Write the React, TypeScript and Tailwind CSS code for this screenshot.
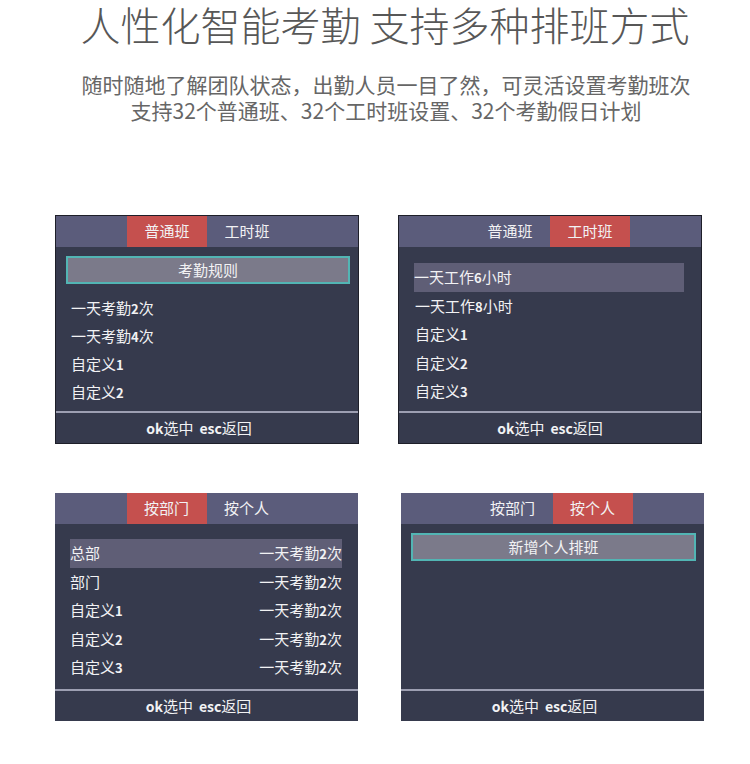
import React from 'react';

type PanelProps = {
  tabs: [string, string];
  active: 0 | 1;
  bordered?: boolean;
  shiftFooter?: boolean;
  className?: string;
  children?: React.ReactNode;
};

// Bold latin digits as on the device's bitmap font
const Label: React.FC<{ text: string }> = ({ text }) => (
  <span>
    {text.split(/(\d+)/).map((part, i) =>
      /\d/.test(part) ? (
        <span key={i} className="font-bold text-[13px]">{part}</span>
      ) : (
        <span key={i}>{part}</span>
      )
    )}
  </span>
);

const Panel: React.FC<PanelProps> = ({ tabs, active, bordered, shiftFooter, className = '', children }) => (
  <div
    className={`flex flex-col bg-[#363a4d] text-[15px] text-[#f2f2f4] ${bordered ? 'border border-[#1e1f29]' : ''} ${className}`}
  >
    <div className="h-[31px] shrink-0 bg-[#5b5c7b] flex justify-center">
      {tabs.map((t, i) => (
        <div
          key={t}
          className={`w-[80px] flex items-center justify-center ${i === active ? 'bg-[#c5504e]' : ''}`}
        >
          {t}
        </div>
      ))}
    </div>
    <div className="flex-1 flex flex-col">{children}</div>
    <div className="h-[2px] shrink-0 bg-[#9d9fb2]" />
    <div className={`h-[30px] shrink-0 flex items-center justify-center ${shiftFooter ? 'pr-[16px]' : ''}`}>
      <span className="font-bold text-[14px]">ok</span>
      <span>选中</span>
      <span className="font-bold text-[14px] ml-[6px]">esc</span>
      <span>返回</span>
    </div>
  </div>
);

const TealBox: React.FC<{ text: string; className?: string }> = ({ text, className = '' }) => (
  <div
    className={`h-[28px] ml-[10px] mr-[8px] bg-[#7b7a8a] border-2 border-[#52b5b4] flex items-center justify-center ${className}`}
  >
    {text}
  </div>
);

export default function App() {
  return (
    <div className="w-[750px] h-[764px] bg-white overflow-hidden font-['Noto_Sans_CJK_SC',sans-serif]">
      <h1 className="pl-[20px] text-center text-[40px] leading-[48px] font-light text-[#575757]">
        人性化智能考勤 支持多种排班方式
      </h1>
      <div className="mt-[23px] pl-[22px] text-center text-[21px] leading-[26px] text-[#666666]">
        <div>随时随地了解团队状态，出勤人员一目了然，可灵活设置考勤班次</div>
        <div>支持32个普通班、32个工时班设置、32个考勤假日计划</div>
      </div>

      <div className="mt-[92px] flex pl-[55px] gap-[39px]">
        <Panel tabs={['普通班', '工时班']} active={0} bordered shiftFooter className="w-[304px] h-[229px]">
          <TealBox text="考勤规则" className="mt-[9px]" />
          <div className="mt-[10px]">
            {['一天考勤2次', '一天考勤4次', '自定义1', '自定义2'].map(r => (
              <div key={r} className="h-[28px] pl-[15px] flex items-center">
                <Label text={r} />
              </div>
            ))}
          </div>
        </Panel>

        <Panel tabs={['普通班', '工时班']} active={1} bordered className="w-[304px] h-[229px]">
          <div className="pt-[16px]">
            {['一天工作6小时', '一天工作8小时', '自定义1', '自定义2', '自定义3'].map((r, i) => (
              <div
                key={r}
                className={`h-[28.5px] flex items-center ${i === 0 ? 'ml-[15px] mr-[17px] bg-[#5f5e76]' : 'pl-[16px]'}`}
              >
                <Label text={r} />
              </div>
            ))}
          </div>
        </Panel>
      </div>

      <div className="mt-[49px] flex pl-[55px] gap-[43px]">
        <Panel tabs={['按部门', '按个人']} active={0} shiftFooter className="w-[303px] h-[228px]">
          <div className="pt-[15px]">
            {['总部', '部门', '自定义1', '自定义2', '自定义3'].map((r, i) => (
              <div
                key={r}
                className={`h-[28.5px] ml-[15px] mr-[16px] flex items-center justify-between ${i === 0 ? 'bg-[#5f5e76]' : ''}`}
              >
                <Label text={r} />
                <Label text="一天考勤2次" />
              </div>
            ))}
          </div>
        </Panel>

        <Panel tabs={['按部门', '按个人']} active={1} shiftFooter className="w-[303px] h-[228px]">
          <TealBox text="新增个人排班" className="mt-[9px]" />
        </Panel>
      </div>
    </div>
  );
}
